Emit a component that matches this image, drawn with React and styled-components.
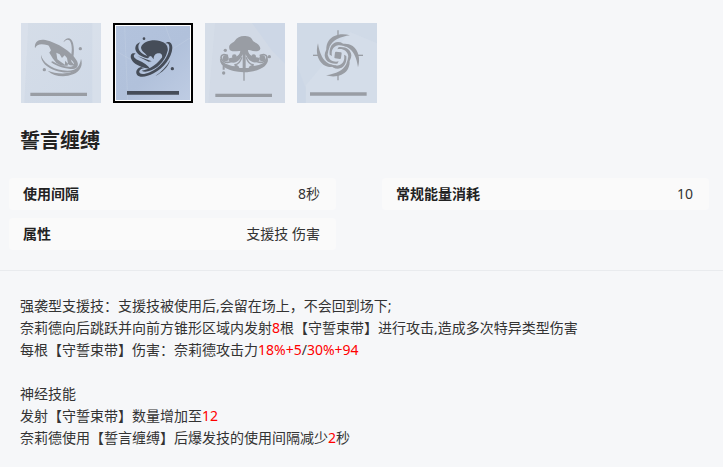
import React, { useState } from 'react'
import styled, { createGlobalStyle } from 'styled-components'

const GlobalStyle = createGlobalStyle`
  * {
    box-sizing: border-box;
  }
  body {
    margin: 0;
    background: #f6f7f9;
    color: #333;
    font-family: "Noto Sans", "Noto Sans CJK SC", sans-serif;
    font-size: 14px;
    line-height: 22px;
  }
`

const Page = styled.main`
  padding-top: 23px;
`

const SkillTabs = styled.div`
  display: flex;
  gap: 12px;
  padding: 0 21px;
`

const SkillButton = styled.button`
  width: 80px;
  height: 80px;
  padding: ${props => (props.$active ? '1px' : '0')};
  border: ${props => (props.$active ? '2px solid #000' : 'none')};
  background: #fff;
  color: ${props => (props.$active ? '#464d59' : '#999da4')};
  cursor: pointer;
`

const Art = styled.svg`
  display: block;
  width: 100%;
  height: 100%;
`

const Title = styled.h2`
  margin: 22px 20px;
  font-size: 20px;
  line-height: 31px;
  font-weight: 700;
  color: #222;
`

const Stats = styled.dl`
  display: grid;
  grid-template-columns: 1fr 1fr;
  gap: 8px 46px;
  margin: 0;
  padding: 0 14px 20px 9px;
  border-bottom: 1px solid #e9ebee;
`

const Stat = styled.div`
  display: flex;
  justify-content: space-between;
  padding: 5px 16px 5px 14px;
  border-radius: 4px;
  background: #fafafa;
`

const StatName = styled.dt`
  font-weight: 700;
  color: #222;
`

const StatValue = styled.dd`
  margin: 0;
`

const Description = styled.section`
  padding: 24px 20px 18px;
`

const Paragraph = styled.p`
  margin: 0 0 22px;

  &:last-child {
    margin-bottom: 0;
  }
`

const Num = styled.span`
  color: #f00;
`

function BladeArt() {
  return (
    <Art viewBox="18 15 240 240" aria-hidden="true">
      <defs>
        <linearGradient id="bladeBg" x1="0" y1="0" x2="1" y2="1">
          <stop offset="0" stopColor="#d5dde8" />
          <stop offset="1" stopColor="#cfd9e7" />
        </linearGradient>
      </defs>
      <path fill="url(#bladeBg)" d="M18 15h240v240H18z" />
      <path fill="#dce3ec" opacity=".6" d="M232 15h26v240h-26zM18 15h22L28 255H18z" />
      <g fill="currentColor">
        <path d="M60 91C57 71 71 62 91 66C129 75 168 99 186 129C192 140 188 153 174 153C153 153 125 146 108 132L113 130C130 142 153 148 168 146C179 145 179 137 173 130C153 110 121 88 96 81C78 77 65 78 60 91Z" />
        <path d="M100 80L127 88L148 103L166 119L170 132L181 143L165 142L103 104L108 97Z" />
        <path d="M103 104L130 100L160 130L158 143L139 143L124 135L113 121Z" />
      </g>
      <path fill="#d3dce8" d="M124 104L134 109L141 120L149 112L156 120L159 137L150 128L150 140L138 132L127 124Z" />
      <g fill="currentColor">
        <path d="M78 110C83 132 107 151 143 157C164 161 181 156 190 147L187 155C173 166 145 165 123 158C96 149 77 132 78 110Z" />
        <path d="M98 158C115 165 146 170 167 163C186 155 195 142 198 122C205 143 195 160 174 169C147 180 116 175 98 158Z" />
        <path d="M145 73C153 56 169 56 174 75C178 91 177 105 175 118L168 113C173 96 170 73 163 67C157 62 151 67 145 73Z" />
        <circle cx="196" cy="92" r="5" />
        <circle cx="88" cy="155" r="5" />
        <path d="M46 224h170v10H46z" />
      </g>
    </Art>
  )
}

function BindArt() {
  return (
    <Art viewBox="24 24 222 222" aria-hidden="true">
      <defs>
        <linearGradient id="bindBg" x1="0" y1="0" x2="1" y2="1">
          <stop offset="0" stopColor="#b3c3dd" />
          <stop offset=".55" stopColor="#b1c1db" />
          <stop offset="1" stopColor="#becce3" />
        </linearGradient>
      </defs>
      <path fill="url(#bindBg)" d="M24 24h222v222H24z" />
      <g fill="none" stroke="#c9d5e7" strokeWidth="2" opacity=".5">
        <path d="M24 99L83 133M172 24L188 68M190 95L246 60M50 24L59 246" />
      </g>
      <g fill="currentColor">
        <circle cx="108" cy="62" r="4" />
        <path d="M99 88C104 74 120 67 140 67C162 68 178 77 179 91C179 103 171 113 162 121C165 109 158 104 149 106C140 108 136 116 137 124L129 114L119 117C116 107 99 102 99 88Z" />
        <path d="M97 73C86 75 77 88 85 101C92 112 106 118 120 121L124 116C108 111 95 103 92 93C90 85 91 79 97 73Z" />
        <path d="M83 107C73 111 77 120 91 127C107 134 119 141 127 153L108 149C90 144 72 134 69 121C66 109 73 103 83 107Z" />
        <path d="M88 114L131 130L122 131Z" />
        <path d="M170 77C182 66 194 74 193 91C191 119 168 150 137 166C115 178 94 180 87 170C81 161 88 149 99 147L108 151C95 153 91 161 96 166C106 173 130 162 148 149C170 133 184 107 184 88C184 77 179 74 170 77Z" />
        <path d="M180 90C177 121 154 147 130 157C117 162 107 162 101 158C124 156 154 134 167 111C173 102 178 94 180 90Z" />
        <path d="M187 125C180 149 162 163 142 174C160 161 177 145 187 125Z" />
        <circle cx="193" cy="152" r="5" />
        <path d="M57 219h156v11H57z" />
      </g>
    </Art>
  )
}

function MushroomArt() {
  return (
    <Art viewBox="15 15 240 240" aria-hidden="true">
      <path fill="#d2dae6" d="M15 15h240v240H15z" />
      <path fill="#cdd7e6" d="M156 15h99v122l-40-40z" />
      <path fill="#d7dfe9" opacity=".6" d="M15 15h30L25 255H15z" />
      <g fill="currentColor">
        <path d="M88 92C85 78 95 78 104 69C111 57 123 53 136 54C150 55 156 61 159 69C168 75 181 80 181 92C179 101 163 101 151 97C139 94 125 99 110 100C98 100 89 99 88 92Z" />
        <path d="M121 96H144C144 107 154 117 169 118C178 118 182 124 176 130C161 140 144 128 137 109V160H128V109C121 127 106 140 89 131C82 126 86 119 94 119C111 119 121 110 121 96Z" />
        <path d="M60 120C57 145 83 160 131 163C179 160 207 145 204 119C198 133 181 141 161 144V138C151 143 146 146 146 150H118C118 145 112 142 104 138V145C84 142 67 135 60 120Z" />
        <path d="M130 160h4v28h-4z" />
      </g>
      <g fill="none" stroke="currentColor" strokeLinecap="round">
        <path strokeWidth="5" d="M92 131C76 137 64 129 63 118C64 108 73 109 82 112M172 131C187 137 200 129 201 118C199 108 190 109 181 112" />
        <path strokeWidth="4" d="M105 140C117 139 122 128 125 119M159 140C147 139 142 128 139 119" />
      </g>
      <g fill="currentColor">
        <circle cx="77" cy="121" r="9" />
        <circle cx="187" cy="121" r="9" />
        <circle cx="103" cy="116" r="7" />
        <circle cx="161" cy="116" r="7" />
        <circle cx="76" cy="97" r="5" />
        <circle cx="208" cy="116" r="5" />
        <circle cx="71" cy="165" r="5" />
        <path d="M68 143h6v12h-6zM46 227h170v10H46z" />
      </g>
    </Art>
  )
}

// one arm of the vortex, repeated every quarter turn
const armPath =
  'M174 52C148 44 122 51 110 68C101 82 101 98 108 109C108 90 117 73 134 64C147 57 160 54 174 52Z'

function VortexArt() {
  return (
    <Art viewBox="15 15 240 240" aria-hidden="true">
      <path fill="#d0dae7" d="M15 15h240v240H15z" />
      <path fill="#d6deea" d="M255 76L174 42L42 202V255H255z" opacity=".7" />
      <path fill="#c9d5e6" d="M15 142l26 68v45H15z" opacity=".6" />
      <g fill="currentColor">
        {[0, 90, 180, 270].map(angle => (
          <g key={angle} transform={`rotate(${angle} 138 112)`}>
            <path d={armPath} />
            <path d="M113 110C111 87 121 73 138 72C149 72 158 78 162 87C148 77 133 80 124 90C119 97 118 106 120 114Z" />
            <path d="M136 37h4v20h-4z" />
          </g>
        ))}
        <rect x="128" y="102" width="20" height="20" rx="3" transform="rotate(8 138 112)" />
        <path d="M54 223h170v10H54z" />
      </g>
    </Art>
  )
}

const skills = [
  { label: '技能一', Icon: BladeArt },
  { label: '誓言缠缚', Icon: BindArt },
  { label: '技能三', Icon: MushroomArt },
  { label: '技能四', Icon: VortexArt },
]

const stats = [
  { name: '使用间隔', value: '8秒' },
  { name: '常规能量消耗', value: '10' },
  { name: '属性', value: '支援技 伤害' },
]

export default function App() {
  const [active, setActive] = useState(1)

  return (
    <Page>
      <GlobalStyle />
      <SkillTabs>
        {skills.map(({ label, Icon }, i) => (
          <SkillButton
            key={label}
            type="button"
            aria-label={label}
            aria-pressed={active === i}
            $active={active === i}
            onClick={() => setActive(i)}
          >
            <Icon />
          </SkillButton>
        ))}
      </SkillTabs>
      <Title>誓言缠缚</Title>
      <Stats>
        {stats.map(stat => (
          <Stat key={stat.name}>
            <StatName>{stat.name}</StatName>
            <StatValue>{stat.value}</StatValue>
          </Stat>
        ))}
      </Stats>
      <Description>
        <Paragraph>
          强袭型支援技：支援技被使用后,会留在场上，不会回到场下;<br />
          奈莉德向后跳跃并向前方锥形区域内发射<Num>8</Num>根【守誓束带】进行攻击,造成多次特异类型伤害<br />
          每根【守誓束带】伤害：奈莉德攻击力<Num>18%+5</Num>/<Num>30%+94</Num>
        </Paragraph>
        <Paragraph>
          神经技能<br />
          发射【守誓束带】数量增加至<Num>12</Num><br />
          奈莉德使用【誓言缠缚】后爆发技的使用间隔减少<Num>2</Num>秒
        </Paragraph>
      </Description>
    </Page>
  )
}
